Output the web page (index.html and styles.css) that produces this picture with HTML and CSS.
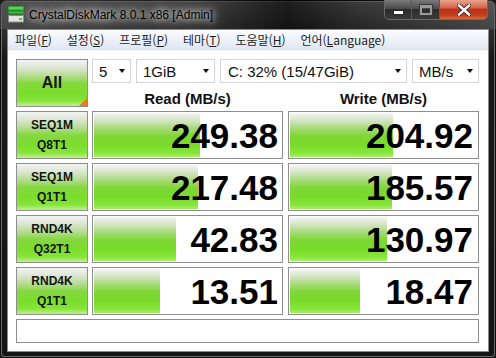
FILE: index.html
```html
<!doctype html>
<html lang="ko">
  <head>
    <meta charset="UTF-8" />
    <meta name="viewport" content="width=device-width, initial-scale=1.0" />
    <title>CrystalDiskMark</title>
    <link rel="stylesheet" href="styles.css">
  </head>
  <body>
    <div class="window">
      <div class="titlebar">
        <svg class="app-icon" width="16" height="17" viewBox="0 0 16 17">
          <rect x="0.5" y="0.5" width="15" height="3.5" fill="#52d452" stroke="#2c9c34" stroke-width="1" />
          <rect x="0.5" y="5" width="15" height="3" fill="#35b83c" stroke="#248a2c" stroke-width="1" />
          <rect x="0.5" y="9.5" width="15" height="6.5" fill="#e4e4e4" stroke="#8a8a8a" stroke-width="1" />
          <rect x="11" y="12" width="3" height="2" fill="#3fcf3f" />
        </svg>
        <span class="title">CrystalDiskMark 8.0.1 x86 [Admin]</span>
        <div class="caption-buttons">
          <div class="cap-btn cap-min"><span class="min-glyph"></span></div>
          <div class="cap-btn cap-max"><span class="max-glyph"></span></div>
          <div class="cap-btn cap-close">
            <svg width="14" height="12" viewBox="0 0 14 12">
              <path d="M2 1.5 L12 10.5 M12 1.5 L2 10.5" stroke="#3a2a28" stroke-width="4.2" stroke-linecap="square" />
              <path d="M2 1.5 L12 10.5 M12 1.5 L2 10.5" stroke="#fff" stroke-width="2.4" stroke-linecap="square" />
            </svg>
          </div>
        </div>
      </div>

      <div class="client">
        <div class="menubar">
          <span class="menu-item">파일(<u>F</u>)</span>
          <span class="menu-item">설정(<u>S</u>)</span>
          <span class="menu-item">프로필(<u>P</u>)</span>
          <span class="menu-item">테마(<u>T</u>)</span>
          <span class="menu-item">도움말(<u>H</u>)</span>
          <span class="menu-item">언어(<u>L</u>anguage)</span>
        </div>

        <div class="bench">
          <div class="top-row">
            <div class="btn all-btn">All</div>
            <div class="settings">
              <div class="combos">
                <div class="combo combo-count">5<i class="arrow"></i></div>
                <div class="combo combo-size">1GiB<i class="arrow"></i></div>
                <div class="combo combo-drive">C: 32% (15/47GiB)<i class="arrow"></i></div>
                <div class="combo combo-unit">MB/s<i class="arrow"></i></div>
              </div>
              <div class="headers">
                <div class="col-head">Read (MB/s)</div>
                <div class="col-head">Write (MB/s)</div>
              </div>
            </div>
          </div>

          <div class="results">
            <div class="btn test-btn">SEQ1M<br />Q8T1</div>
            <div class="cell" style="--bar: 106px"><span class="value">249.38</span></div>
            <div class="cell write" style="--bar: 103px"><span class="value">204.92</span></div>

            <div class="btn test-btn">SEQ1M<br />Q1T1</div>
            <div class="cell" style="--bar: 104px"><span class="value">217.48</span></div>
            <div class="cell write" style="--bar: 102px"><span class="value">185.57</span></div>

            <div class="btn test-btn">RND4K<br />Q32T1</div>
            <div class="cell" style="--bar: 82px"><span class="value">42.83</span></div>
            <div class="cell write" style="--bar: 97px"><span class="value">130.97</span></div>

            <div class="btn test-btn">RND4K<br />Q1T1</div>
            <div class="cell" style="--bar: 66px"><span class="value">13.51</span></div>
            <div class="cell write" style="--bar: 70px"><span class="value">18.47</span></div>
          </div>

          <div class="comment"></div>
        </div>
      </div>
    </div>
  </body>
</html>
```

FILE: styles.css
```css
html,
body {
  margin: 0;
  padding: 0;
  background: #1a1a1a;
}

body {
  width: 496px;
  height: 358px;
  overflow: hidden;
  font-family: "Liberation Sans", Arial, sans-serif;
}

.window {
  box-sizing: border-box;
  width: 496px;
  height: 358px;
  padding: 0 7px 7px;
  border-radius: 7px 7px 5px 5px;
  background: linear-gradient(to bottom, #4a4a4a 0, #2e2e2e 30px, #181818 60px, #151515 100%);
  box-shadow: inset 0 0 0 1px #0a0a0a, inset 0 0 0 2px #6c6c6c;
}

/* title bar */
.titlebar {
  display: flex;
  align-items: flex-start;
  height: 29px;
  margin: 0 -7px;
  padding-left: 8px;
  border-radius: 7px 7px 0 0;
  background: linear-gradient(to right, rgba(90, 90, 90, 0.55) 0, rgba(50, 50, 50, 0.3) 40%, rgba(0, 0, 0, 0.6) 58%, rgba(0, 0, 0, 0.2) 72%, rgba(110, 110, 110, 0.35) 100%);
}
.app-icon {
  margin-top: 6px;
  flex: none;
}
.title {
  margin-left: 5px;
  margin-top: 7px;
  font-size: 12px;
  line-height: 16px;
  color: #000;
  text-shadow: 0 0 6px rgba(255, 255, 255, 0.9), 0 0 10px rgba(255, 255, 255, 0.8), 0 0 16px rgba(220, 220, 220, 0.7);
}
.caption-buttons {
  display: flex;
  margin-left: auto;
  margin-right: 8px;
  border: 1px solid #6a6a6a;
  border-top: none;
  border-radius: 0 0 5px 5px;
  overflow: hidden;
}
.cap-btn {
  height: 19px;
  display: flex;
  align-items: center;
  justify-content: center;
}
.cap-min,
.cap-max {
  width: 26px;
  background: linear-gradient(to bottom, #7a7a7a 0, #4c4c4c 45%, #2c2c2c 50%, #3a3a3a 100%);
  border-right: 1px solid #5a5a5a;
}
.cap-max {
  width: 27px;
}
.cap-close {
  width: 47px;
  background: linear-gradient(to bottom, #e8a290 0, #d4664a 40%, #b8331a 50%, #c2401e 80%, #d86a3c 100%);
}
.min-glyph {
  width: 9px;
  height: 3px;
  margin-top: 6px;
  background: #fff;
  border: 1px solid #2a2a2a;
}
.max-glyph {
  width: 8px;
  height: 5px;
  border: 2px solid #9a9a9a;
  border-top-width: 3px;
  outline: 1px solid #3a3a3a;
}

/* client area */
.client {
  border: 1px solid #8a8a8a;
  background: #fff;
}
.menubar {
  display: flex;
  gap: 15px;
  height: 20px;
  padding-left: 7px;
  font-family: "Noto Sans CJK KR", "Liberation Sans", sans-serif;
  font-size: 12px;
  line-height: 20px;
  color: #1e1e1e;
  background: linear-gradient(to bottom, #fbfcfe 0, #eef2f9 45%, #dfe6f2 100%);
  border-bottom: 1px solid #f4f6fa;
}
.menu-item u {
  text-underline-offset: 1px;
}

.bench {
  padding: 8px 0 8px 8px;
}
.top-row {
  display: flex;
  gap: 4px;
  height: 48px;
}
.btn {
  box-sizing: border-box;
  border: 1px solid #8f8f8f;
  display: flex;
  align-items: center;
  justify-content: center;
  text-align: center;
  color: #141414;
  font-weight: bold;
  background: linear-gradient(to bottom, #f2f3f1 0, #dfe8d8 15%, #b4dc8e 35%, #86d842 50%, #7bdc2c 70%, #86e43a 88%, #bff18e 100%);
}
.all-btn {
  position: relative;
  width: 72px;
  font-size: 16px;
}
.all-btn::after {
  content: "";
  position: absolute;
  right: 0;
  bottom: 0;
  border-style: solid;
  border-width: 0 0 8px 8px;
  border-color: transparent transparent #f37a12 transparent;
}
.settings {
  width: 387px;
  display: flex;
  flex-direction: column;
}
.combos {
  display: flex;
  gap: 5px;
  height: 24px;
}
.combo {
  box-sizing: border-box;
  display: flex;
  align-items: center;
  padding: 0 5px 0 6px;
  border: 1px solid #d4d4d4;
  font-size: 15px;
  color: #111;
}
.combo-count { width: 39px; }
.combo-size { width: 79px; }
.combo-drive { width: 187px; padding-left: 7px; }
.combo-unit { width: 67px; }
.arrow {
  margin-left: auto;
  width: 0;
  height: 0;
  border-style: solid;
  border-width: 4px 3.5px 0 3.5px;
  border-color: #111 transparent transparent transparent;
}
.headers {
  flex: 1;
  display: grid;
  grid-template-columns: 191px 191px;
  column-gap: 5px;
  align-items: end;
}
.col-head {
  text-align: center;
  font-size: 15px;
  font-weight: bold;
  line-height: 17px;
  color: #111;
}

.results {
  display: grid;
  grid-template-columns: 72px 191px 192px;
  grid-auto-rows: 48px;
  column-gap: 4px;
  row-gap: 4px;
  margin-top: 4px;
}
.test-btn {
  font-size: 12px;
  line-height: 20px;
}
.cell {
  box-sizing: border-box;
  border: 1px solid #8f8f8f;
  padding: 1px;
  display: flex;
  align-items: center;
  justify-content: flex-end;
  background-color: #fff;
  background-image: linear-gradient(to bottom, #f5f6f3 0, #d8e7cb 15%, #a6da78 35%, #7fd735 52%, #78da2a 72%, #86e53a 90%, #a8ee66 100%);
  background-origin: content-box;
  background-repeat: no-repeat;
  background-size: var(--bar) 100%;
}
.cell.write {
  margin-left: 1px;
}
.value {
  padding-right: 3px;
  font-size: 35px;
  font-weight: bold;
  line-height: 1;
  color: #000;
}
.cell.write .value {
  padding-right: 4px;
}

.comment {
  box-sizing: border-box;
  width: 463px;
  height: 24px;
  margin-top: 4px;
  border: 1px solid #8f8f8f;
}
```
